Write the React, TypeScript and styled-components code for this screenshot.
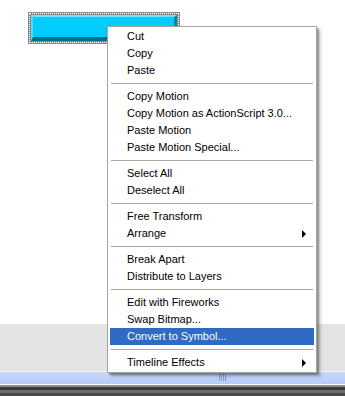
import styled, { createGlobalStyle } from 'styled-components'

const GlobalStyle = createGlobalStyle`
  html, body {
    margin: 0;
    padding: 0;
    background: #ffffff;
  }
  body {
    font-family: Tahoma, "Liberation Sans", "DejaVu Sans", sans-serif;
    font-size: 11px;
    color: #000;
  }
`

type Entry = { label: string; submenu?: boolean; active?: boolean } | 'sep'

const entries: Entry[] = [
  { label: 'Cut' },
  { label: 'Copy' },
  { label: 'Paste' },
  'sep',
  { label: 'Copy Motion' },
  { label: 'Copy Motion as ActionScript 3.0...' },
  { label: 'Paste Motion' },
  { label: 'Paste Motion Special...' },
  'sep',
  { label: 'Select All' },
  { label: 'Deselect All' },
  'sep',
  { label: 'Free Transform' },
  { label: 'Arrange', submenu: true },
  'sep',
  { label: 'Break Apart' },
  { label: 'Distribute to Layers' },
  'sep',
  { label: 'Edit with Fireworks' },
  { label: 'Swap Bitmap...' },
  { label: 'Convert to Symbol...', active: true },
  'sep',
  { label: 'Timeline Effects', submenu: true },
]

export default function App() {
  return (
    <Screen>
      <GlobalStyle />
      <Stage>
        <Selection>
          <CyanButton />
        </Selection>
      </Stage>
      <Pasteboard />
      <StatusBar>
        <Grip>
          <span />
          <span />
          <span />
          <span />
        </Grip>
      </StatusBar>
      <BottomEdge />

      <Menu>
        {entries.map((entry, i) =>
          entry === 'sep' ? (
            <Separator key={i} />
          ) : (
            <Item key={i} $active={entry.active}>
              <Label>{entry.label}</Label>
              {entry.submenu && <Arrow />}
            </Item>
          ),
        )}
      </Menu>
    </Screen>
  )
}

const Screen = styled.div`
  position: relative;
  width: 345px;
  height: 396px;
  overflow: hidden;
  display: flex;
  flex-direction: column;
`

const Stage = styled.div`
  height: 324px;
  background: #ffffff;
  padding: 12px 0 0 28px;
  box-sizing: border-box;
`

const Selection = styled.div`
  width: 152px;
  height: 32px;
  box-sizing: border-box;
  border: 3px solid #8a8a8a;
  outline: 1px dotted #ffffff;
  outline-offset: -2px;
  background: #8a8a8a;
`

const CyanButton = styled.div`
  width: 100%;
  height: 100%;
  box-sizing: border-box;
  background: #00ccff;
  border-top: 2px solid #6fe2ff;
  border-left: 2px solid #4fdaff;
  border-right: 3px solid #0089ad;
  border-bottom: 4px solid #00708e;
`

const Pasteboard = styled.div`
  height: 47px;
  background: #e4e4e4;
  border-bottom: 1px solid #f4f4f4;
`

const StatusBar = styled.div`
  height: 13px;
  background: linear-gradient(#c9d9fb, #b5cbf7);
  border-bottom: 1px solid #ffffff;
  display: flex;
  justify-content: center;
  padding-left: 99px;
  box-sizing: border-box;
`

const Grip = styled.div`
  display: flex;
  gap: 1px;
  margin-top: 2px;
  height: 7px;

  span {
    width: 1px;
    background: #7e9ed8;
  }
`

const BottomEdge = styled.div`
  flex: 1;
  background: linear-gradient(
    #8a8a8a 0,
    #8a8a8a 2px,
    #3a3a3a 2px,
    #3a3a3a 5px,
    #6e6e6e 5px,
    #6e6e6e 8px,
    #4a4a4a 8px
  );
`

const Menu = styled.div`
  position: absolute;
  left: 107px;
  top: 26px;
  width: 210px;
  box-sizing: border-box;
  background: #ffffff;
  border: 1px solid #a4a39c;
  padding: 1px 2px 1px 2px;
  box-shadow: 2px 2px 2px rgba(0, 0, 0, 0.35), 4px 4px 3px rgba(0, 0, 0, 0.15);
`

const Item = styled.div<{ $active?: boolean }>`
  height: 17px;
  display: flex;
  align-items: center;
  padding: 0 8px 0 17px;
  background: ${(p) => (p.$active ? '#316ac5' : 'transparent')};
  color: ${(p) => (p.$active ? '#ffffff' : '#000000')};
`

const Label = styled.span`
  flex: 1;
  white-space: nowrap;
  line-height: 17px;
`

const Arrow = styled.span`
  width: 0;
  height: 0;
  border-top: 4px solid transparent;
  border-bottom: 4px solid transparent;
  border-left: 4px solid #000000;
`

const Separator = styled.div`
  height: 9px;
  display: flex;
  align-items: center;
  padding: 0 1px;

  &::before {
    content: '';
    flex: 1;
    height: 1px;
    background: #aca899;
  }
`
